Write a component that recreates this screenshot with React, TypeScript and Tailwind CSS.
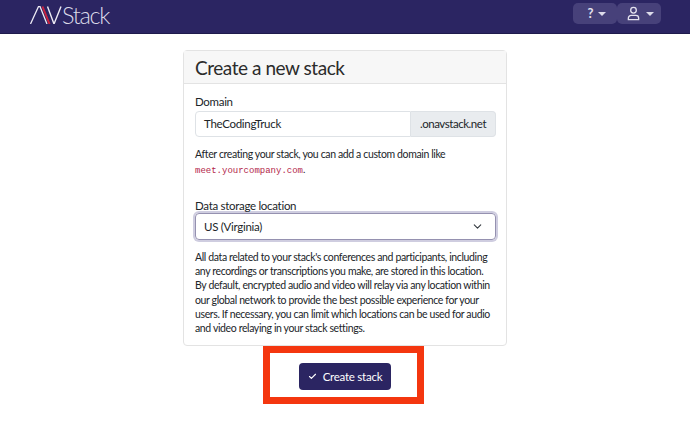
import { Check, ChevronDown } from 'lucide-react';

const Caret = () => (
  <span className="ml-[5px] h-0 w-0 border-x-[4px] border-t-[4px] border-x-transparent border-t-[#dddbea]" />
);

const Navbar = () => (
  <nav className="flex h-[34px] items-start justify-between border-b border-[#1f1a4c] bg-[#2b2562] pt-[3px] pr-[29px] pl-[30px]">
    <div className="flex h-[24px] items-center">
      <svg width="32" height="18" viewBox="0 0 32 18" fill="none">
        <path d="M0.5 18 L8.5 0.5 L10 0.5 L17 18" stroke="#eceaf4" strokeWidth="1.3" />
        <path d="M12.5 0.5 L19.5 18" stroke="#c9223f" strokeWidth="2" />
        <path d="M17.5 0.5 L24 18 L31 0.5" stroke="#eceaf4" strokeWidth="1.4" />
      </svg>
      <span className="pr-[2px] text-[23.5px] leading-[24px] font-light tracking-[-1.3px] text-[#dcdbe9]">Stack</span>
    </div>
    <div className="flex">
      <button className="flex h-[21px] w-[44px] items-center justify-center rounded-[5px] bg-[#47417a] pl-[4px] text-[13px] font-bold text-[#e4e2ef]">
        ?
        <Caret />
      </button>
      <button className="flex h-[21px] w-[44px] items-center justify-center rounded-[5px] bg-[#47417a] pl-[2px]">
        <svg width="15" height="15" viewBox="0 0 16 16" fill="none" stroke="#e4e2ef" strokeWidth="1.4">
          <circle cx="8" cy="4.5" r="3" />
          <path d="M2.5 14.5 v-1.5 a3 3 0 0 1 3-3 h5 a3 3 0 0 1 3 3 v1.5 z" />
        </svg>
        <Caret />
      </button>
    </div>
  </nav>
);

export default function App() {
  return (
    <div className="h-[440px] w-[690px] overflow-hidden bg-white font-['Lato',sans-serif] text-[#212529]">
      <Navbar />

      <div className="flex flex-col items-center pt-[16px]">
        {/* Card */}
        <div className="h-[296px] w-[324px] rounded-[4px] border border-[#e3e3e3]">
          <div className="flex h-[33px] items-center border-b border-[#e3e3e3] bg-[#f7f7f7] pl-[11px] text-[19px] leading-none tracking-[-0.45px] text-[#2b2b2b]">
            Create a new stack
          </div>

          <div className="pt-[9px] pr-[10px] pl-[11px]">
            <label className="block text-[11.5px] leading-[18px] tracking-[-0.3px]">Domain</label>
            <div className="flex h-[26px] text-[11.5px] tracking-[-0.3px]">
              <div className="flex flex-1 items-center rounded-l-[4px] border border-[#dee2e6] pl-[8px]">
                TheCodingTruck
              </div>
              <div className="flex w-[85px] items-center justify-center rounded-r-[4px] border border-l-0 border-[#dee2e6] bg-[#e9ecef] tracking-[-0.45px]">
                .onavstack.net
              </div>
            </div>

            <p className="mt-[10px] text-[10.5px] leading-[14px] tracking-[-0.375px]">
              After creating your stack, you can add a custom domain like
            </p>
            <p className="text-[10px] leading-[16px]">
              <code className="font-['Liberation_Mono',monospace] text-[9px] text-[#b3264a]">meet.yourcompany.com</code>.
            </p>

            <label className="mt-[19px] block text-[11.5px] leading-[16px] tracking-[-0.3px]">
              Data storage location
            </label>
            <div className="mt-[-1px] flex h-[27px] items-center justify-between rounded-[4px] border border-[#9591b0] pr-[11px] pl-[8px] text-[11.5px] tracking-[-0.3px] shadow-[0_0_0_2px_#cfcde0]">
              US (Virginia)
              <ChevronDown size={13} strokeWidth={2} className="text-[#343a40]" />
            </div>

            <p className="mt-[10px] text-[10.5px] leading-[14.2px] tracking-[-0.375px] whitespace-nowrap">
              All data related to your stack's conferences and participants, including
              <br />
              any recordings or transcriptions you make, are stored in this location.
              <br />
              By default, encrypted audio and video will relay via any location within
              <br />
              our global network to provide the best possible experience for your
              <br />
              users. If necessary, you can limit which locations can be used for audio
              <br />
              and video relaying in your stack settings.
            </p>
          </div>
        </div>

        {/* Highlight box round the button */}
        <div className="mr-[3px] flex h-[58px] w-[161px] items-center border-[7px] border-[#f4360f] pt-[3px] pl-[29px]">
          <button className="flex h-[27px] w-[92px] items-center justify-center gap-[6px] rounded-[4px] bg-[#2b2562] text-[11.5px] tracking-[-0.25px] text-white">
            <Check size={9} strokeWidth={3} />
            Create stack
          </button>
        </div>
      </div>
    </div>
  );
}
